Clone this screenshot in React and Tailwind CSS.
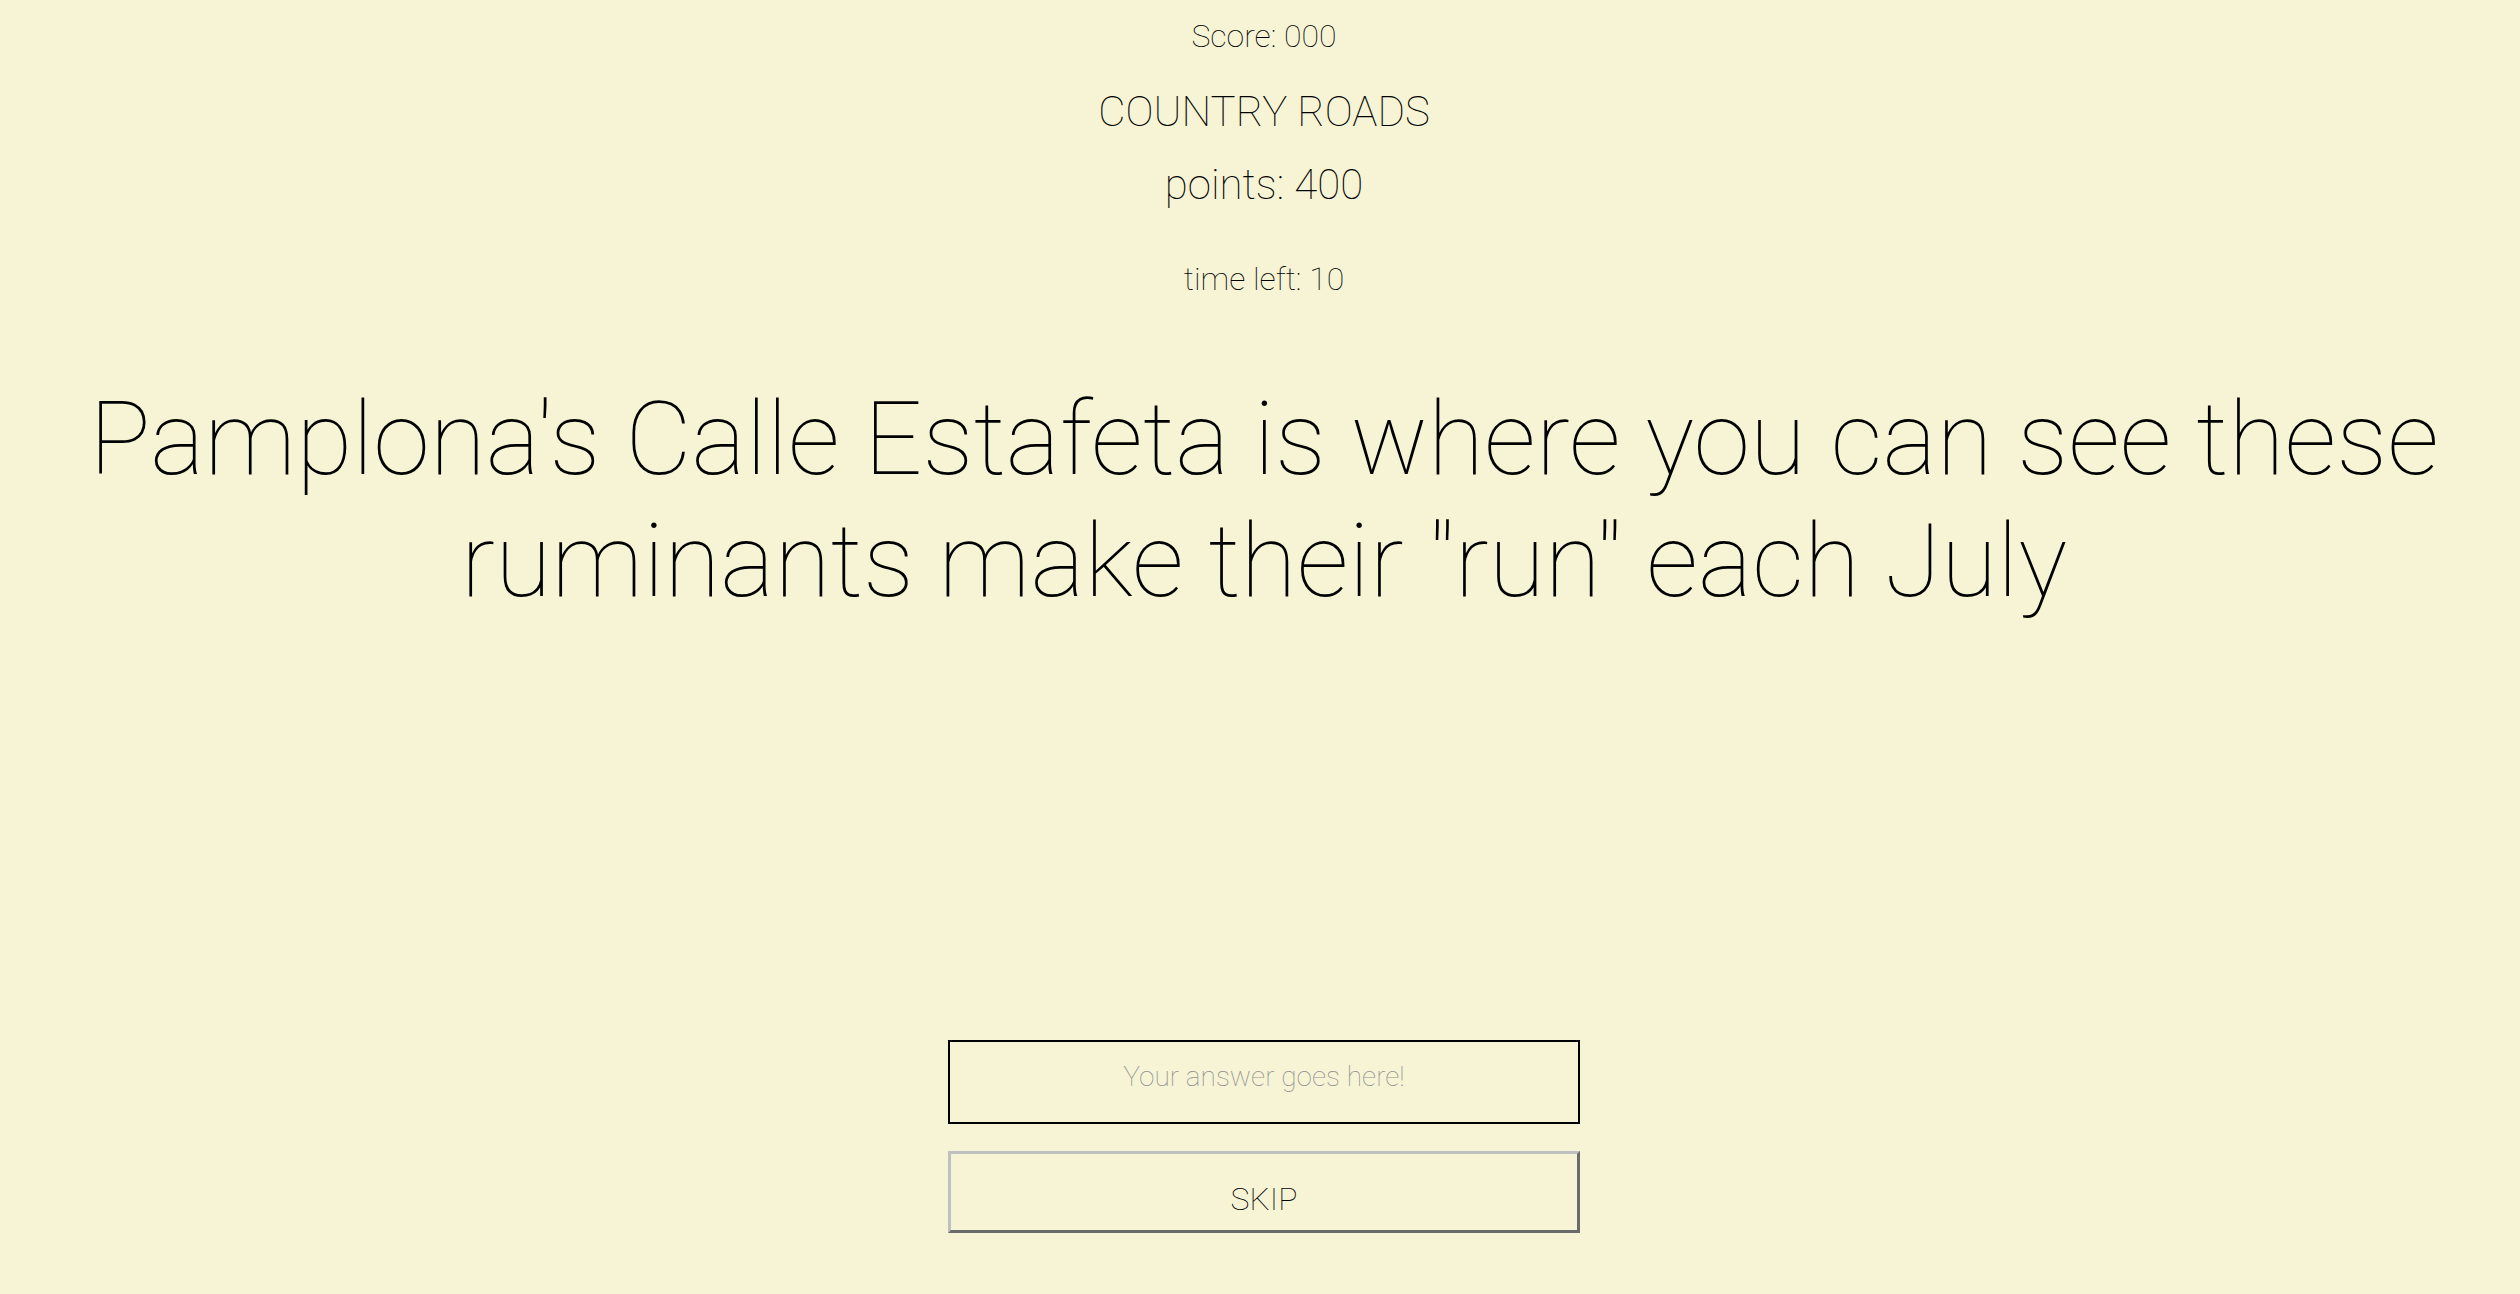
import React, { useState } from 'react';

function App() {
  const [answer, setAnswer] = useState('');
  const score = '000';
  const category = 'COUNTRY ROADS';
  const points = 400;
  const timeLeft = 10;
  const question = 'Pamplona\'s Calle Estafeta is where you can see these ruminants make their "run" each July';

  return (
    <div className="min-h-screen bg-[#f6f4d5] text-black font-thin font-['Roboto','Liberation_Sans',sans-serif] flex flex-col items-center pl-[8px]">
      <p className="mt-[17px] text-[32px] leading-[38px]">Score: {score}</p>
      <h2 className="mt-[32px] text-[42px] leading-[50px]">{category}</h2>
      <p className="mt-[23px] text-[42px] leading-[50px]">points: {points}</p>
      <p className="mt-[50px] text-[32px] leading-[38px]">time left: {timeLeft}</p>

      <h1 className="mt-[80px] w-full px-[40px] text-center text-[102.5px] leading-[122px]">
        {question}
      </h1>

      <div className="mt-[418px] flex flex-col items-center gap-[27px]">
        <input
          value={answer}
          onChange={(e) => setAnswer(e.target.value)}
          placeholder="Your answer goes here!"
          className="w-[632px] h-[84px] pb-[12px] border-2 border-black bg-transparent text-center text-[28px] font-thin outline-none placeholder:text-[#8f8f8f]"
        />
        <button className="w-[632px] h-[82px] pt-[13px] border-[3px] border-t-[#c0c0c0] border-l-[#c0c0c0] border-b-[#6b6b6b] border-r-[#6b6b6b] bg-transparent text-black text-[32px] font-thin">
          SKIP
        </button>
      </div>
    </div>
  );
}

export default App;
